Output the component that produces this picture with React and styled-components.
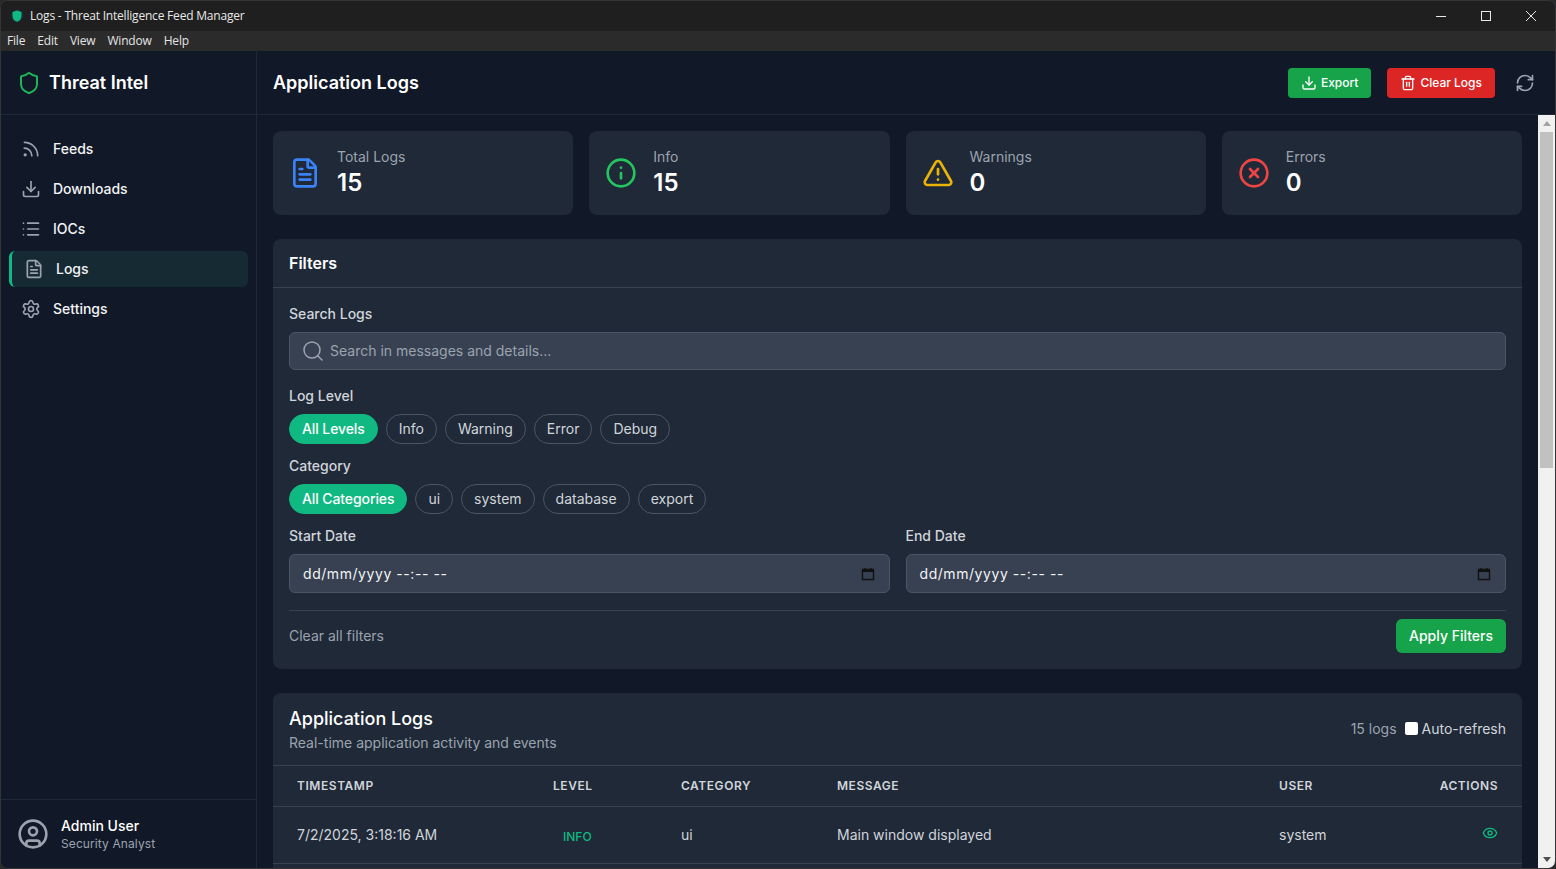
import React from 'react';
import styled, { createGlobalStyle } from 'styled-components';
import {
  Rss, Download, List, FileText, Settings, CircleUser, RefreshCw, Trash2,
  Info, TriangleAlert, CircleX, Search, Eye, Shield,
} from 'lucide-react';

const Global = createGlobalStyle`
  html, body { margin: 0; height: 100%; background: #2a2a2a; overflow: hidden; }
  * { box-sizing: border-box; }
  body { font-family: Inter, "Liberation Sans", sans-serif; color: #fff; }
`;

const Window = styled.div`
  width: 1556px; height: 869px; display: flex; flex-direction: column;
  background: #111827; border-radius: 8px; overflow: hidden; border: 1px solid #353535;
`;
const TitleBar = styled.div`
  height: 30px; flex: none; display: flex; align-items: center; background: #1f1f1f;
  padding: 0 2px 0 9px; font: 12px "Open Sans", sans-serif; color: #e8e8e8;
`;
const AppIcon = styled.svg`width: 14px; height: 14px; margin-right: 6px; flex: none;`;
const TitleText = styled.span`flex: 1; letter-spacing: -0.2px; padding-bottom: 2px;`;
const WinButton = styled.div`
  width: 45px; height: 30px; display: flex; align-items: center; justify-content: center;
  svg { width: 12px; height: 12px; stroke: #e8e8e8; fill: none; stroke-width: 1; }
`;
const MenuBar = styled.div`
  height: 20px; flex: none; display: flex; align-items: center; background: #2b2b2b;
  padding-bottom: 2px;
`;
const MenuItem = styled.span`
  padding: 0 6px; font: 12px "Open Sans", sans-serif; color: #e4e4e4; letter-spacing: -0.18px;
`;
const Body = styled.div`flex: 1; min-height: 0; display: flex;`;
const Sidebar = styled.aside`
  width: 256px; flex: none; display: flex; flex-direction: column;
  background: #111827; border-right: 1px solid #1f2937;
`;
const Brand = styled.div`
  height: 64px; flex: none; display: flex; align-items: center; gap: 8px; padding: 0 16px;
  border-bottom: 1px solid #1f2937; font-size: 18px; font-weight: 600;
  svg { width: 24px; height: 24px; color: #22c55e; flex: none; opacity: .9; }
`;
const Nav = styled.nav`flex: 1; display: flex; flex-direction: column; gap: 4px; padding: 16px 8px 0 8px;`;
const NavItem = styled.div`
  height: 36px; display: flex; align-items: center; gap: 12px; padding-left: 12px;
  font-size: 14px; font-weight: 500; color: #f3f4f6; border-radius: 6px;
  border-left: ${p => (p.$active ? '3px solid #10b981' : 'none')};
  background: ${p => (p.$active ? '#162a33' : 'transparent')};
  svg { width: 20px; height: 20px; color: #9ca3af; flex: none; }
`;
const NavLabel = styled.span`padding-bottom: 1px;`;
const UserBox = styled.div`
  height: 69px; flex: none; display: flex; align-items: center; gap: 12px; padding: 0 16px;
  border-top: 1px solid #1f2937;
  svg { width: 32px; height: 32px; color: #9ca3af; flex: none; }
`;
const UserName = styled.div`font-size: 14px; font-weight: 500; line-height: 18px;`;
const UserRole = styled.div`font-size: 12px; color: #9ca3af; line-height: 17px; letter-spacing: 0.1px;`;

const Main = styled.div`flex: 1; min-width: 0; display: flex; flex-direction: column;`;
const TopBar = styled.header`
  height: 64px; flex: none; display: flex; align-items: center; padding: 0 20px 0 16px;
  border-bottom: 1px solid #1f2937;
`;
const PageTitle = styled.h1`flex: 1; margin: 0; font-size: 18px; font-weight: 600;`;
const ActionButton = styled.div`
  height: 30px; display: flex; align-items: center; gap: 4px; padding: 0 13px; border-radius: 4px;
  margin-right: ${p => p.$mr}px; background: ${p => p.$bg};
  font-size: 12px; font-weight: 500; color: #fff;
  svg { width: 16px; height: 16px; }
`;
const RefreshIcon = styled(RefreshCw)`width: 20px; height: 20px; color: #9ca3af;`;
const ScrollRow = styled.div`flex: 1; min-height: 0; display: flex;`;
const Content = styled.div`
  flex: 1; min-width: 0; overflow: hidden; display: flex; flex-direction: column; gap: 24px;
  padding: 16px 16px 0 16px;
`;
const Scrollbar = styled.div`
  width: 17px; flex: none; background: #f1f1f1; display: flex; flex-direction: column;
  align-items: center;
`;
const ScrollArrow = styled.div`
  height: 17px; flex: none; width: 100%; display: flex; align-items: center; justify-content: center;
  svg { width: 8px; height: 5px; fill: ${p => p.$fill}; }
`;
const ScrollThumb = styled.div`width: 13px; height: 336px; background: #c1c1c1; flex: none;`;
const ScrollSpacer = styled.div`flex: 1;`;

const StatsRow = styled.div`display: grid; grid-template-columns: repeat(4, 1fr); gap: 16px;`;
const StatCard = styled.div`
  height: 84px; background: #1f2937; border-radius: 8px; display: flex; align-items: center;
  gap: 16px; padding: 0 16px;
`;
const StatIcon = styled.div`
  width: 32px; height: 32px; flex: none; color: ${p => p.$color}; margin-top: -1px;
  svg { width: 32px; height: 32px; display: block; }
`;
const StatLabel = styled.div`font-size: 14px; color: #9ca3af; line-height: 18px; margin-bottom: 2px;`;
const StatValue = styled.div`font-size: 24px; font-weight: 600; line-height: 30px;`;

const Card = styled.section`background: #1f2937; border-radius: 8px; flex: none;`;
const CardHeader = styled.div`
  height: 49px; display: flex; align-items: center; padding: 0 16px; border-bottom: 1px solid #374151;
  font-size: 16px; font-weight: 600;
`;
const FilterBody = styled.div`padding: 16px; display: flex; flex-direction: column;`;
const FieldLabel = styled.label`
  display: block; font-size: 14px; font-weight: 500; color: #d1d5db; line-height: 20px;
  margin-bottom: 8px;
`;
const SearchBox = styled.div`
  height: 38px; display: flex; align-items: center; gap: 5px; padding: 0 11px; border-radius: 6px;
  background: #374151; border: 1px solid #4b5563; margin-bottom: 16px;
  svg { width: 24px; height: 24px; color: #9ca3af; flex: none; stroke-width: 1.5; }
`;
const SearchInput = styled.input`
  flex: 1; border: 0; outline: 0; background: transparent; color: #fff; font: 14px Inter, sans-serif;
  padding: 0; margin-bottom: 1px; &::placeholder { color: #9ca3af; opacity: 1; }
`;
const PillRow = styled.div`display: flex; gap: 8px; margin-bottom: 12px;`;
const Pill = styled.div`
  height: 30px; display: flex; align-items: center; padding: 0 12px 1px; border-radius: 15px;
  font-size: 14px; font-weight: ${p => (p.$active ? 500 : 400)};
  letter-spacing: ${p => (p.$active ? '-0.1px' : '0')};
  color: ${p => (p.$active ? '#fff' : '#d1d5db')};
  background: ${p => (p.$active ? '#10b981' : 'transparent')};
  border: 1px solid ${p => (p.$active ? '#10b981' : '#4b5563')};
`;
const DateGrid = styled.div`display: grid; grid-template-columns: 1fr 1fr; gap: 16px;`;
const DateBox = styled.div`
  height: 39px; display: flex; align-items: center; justify-content: space-between;
  padding: 0 14px 0 13px; background: #374151; border: 1px solid #4b5563; border-radius: 6px;
  font-size: 14px; color: #f3f4f6; letter-spacing: 0.56px;
`;
const CalendarIcon = styled.svg`width: 14px; height: 14px; flex: none;`;
const FilterFooter = styled.div`
  margin-top: 17px; padding-top: 8px; border-top: 1px solid #374151;
  display: flex; align-items: center; justify-content: space-between;
`;
const ClearLink = styled.span`font-size: 14px; color: #9ca3af; margin-bottom: 2px;`;
const ApplyButton = styled.div`
  height: 34px; display: flex; align-items: center; padding: 0 13px 2px; border-radius: 6px;
  background: #16a34a; font-size: 14px; font-weight: 500; color: #fff;
`;
const LogsHeader = styled.div`
  height: 73px; display: flex; align-items: center; justify-content: space-between;
  padding: 2px 16px 0; border-bottom: 1px solid #374151;
`;
const LogsTitle = styled.h2`margin: 0; font-size: 18px; font-weight: 500; line-height: 24px;`;
const LogsSub = styled.div`font-size: 14px; color: #9ca3af; line-height: 20px; margin-top: 2px;`;
const LogsMeta = styled.div`display: flex; align-items: center; margin-top: -3px; font-size: 14px;`;
const LogCount = styled.span`color: #9ca3af; margin-right: 8px;`;
const CheckBox = styled.span`
  width: 13px; height: 13px; background: #fff; border-radius: 2px; margin-right: 4px; flex: none;
`;
const CheckLabel = styled.span`color: #d1d5db;`;
const Row = styled.div`
  display: grid; grid-template-columns: 256px 128px 156px 442px 1fr auto; align-items: center;
  padding: 0 24px; border-bottom: 1px solid #374151; height: ${p => p.$h}px;
`;
const HeadCell = styled.div`
  font-size: 12px; font-weight: 600; color: #d1d5db; letter-spacing: 0.55px; margin-bottom: 1px;
`;
const Cell = styled.div`font-size: 14px; color: #d1d5db; margin-bottom: 1px;`;
const LevelBadge = styled.span`
  font-size: 12px; font-weight: 500; color: #10b981; padding-left: 10px; position: relative; top: 1px;
`;
const ActionIcon = styled.div`
  justify-self: end; color: #10b981; height: 16px; margin-top: -4px;
  svg { width: 16px; height: 16px; display: block; }
`;

const levels = ['All Levels', 'Info', 'Warning', 'Error', 'Debug'];
const categories = ['All Categories', 'ui', 'system', 'database', 'export'];
const stats = [
  { label: 'Total Logs', value: 15, color: '#3b82f6', Icon: FileText },
  { label: 'Info', value: 15, color: '#22c55e', Icon: Info },
  { label: 'Warnings', value: 0, color: '#eab308', Icon: TriangleAlert },
  { label: 'Errors', value: 0, color: '#ef4444', Icon: CircleX },
];
const navs = [
  { label: 'Feeds', Icon: Rss },
  { label: 'Downloads', Icon: Download },
  { label: 'IOCs', Icon: List },
  { label: 'Logs', Icon: FileText, active: true },
  { label: 'Settings', Icon: Settings },
];

const Calendar = () => (
  <CalendarIcon viewBox="0 0 14 14">
    <path d="M1.5 2.5h11v10h-11z" fill="none" stroke="#111" strokeWidth="1.4" />
    <path d="M1.5 2.5h11v2.5h-11z" fill="#111" />
    <path d="M4 1v2M10 1v2" stroke="#111" strokeWidth="1.4" />
  </CalendarIcon>
);

export default function App() {
  return (
    <>
      <Global />
      <Window>
        <TitleBar>
          <AppIcon viewBox="0 0 14 14">
            <circle cx="7" cy="7" r="6.5" fill="#1f2937" />
            <path d="M7 1.5 11.5 3v4c0 3-2 5-4.5 5.8C4.500 12 2.500 10 2.500 7V3z" fill="#10b981" />
          </AppIcon>
          <TitleText>Logs - Threat Intelligence Feed Manager</TitleText>
          <WinButton><svg viewBox="0 0 12 12"><path d="M1 6.500h10" /></svg></WinButton>
          <WinButton><svg viewBox="0 0 12 12"><rect x="1.500" y="1.500" width="9" height="9" /></svg></WinButton>
          <WinButton><svg viewBox="0 0 12 12"><path d="M1 1l10 10M11 1 1 11" /></svg></WinButton>
        </TitleBar>
        <MenuBar>
          {['File', 'Edit', 'View', 'Window', 'Help'].map(m => <MenuItem key={m}>{m}</MenuItem>)}
        </MenuBar>
        <Body>
          <Sidebar>
            <Brand>
              <Shield />
              Threat Intel
            </Brand>
            <Nav>
              {navs.map(({ label, Icon, active }) => (
                <NavItem key={label} $active={active}><Icon /><NavLabel>{label}</NavLabel></NavItem>
              ))}
            </Nav>
            <UserBox>
              <CircleUser />
              <div>
                <UserName>Admin User</UserName>
                <UserRole>Security Analyst</UserRole>
              </div>
            </UserBox>
          </Sidebar>
          <Main>
            <TopBar>
              <PageTitle>Application Logs</PageTitle>
              <ActionButton $bg="#16a34a" $mr={16}><Download />Export</ActionButton>
              <ActionButton $bg="#dc2626" $mr={20}><Trash2 />Clear Logs</ActionButton>
              <RefreshIcon />
            </TopBar>
            <ScrollRow>
              <Content>
                <StatsRow>
                  {stats.map(({ label, value, color, Icon }) => (
                    <StatCard key={label}>
                      <StatIcon $color={color}><Icon /></StatIcon>
                      <div>
                        <StatLabel>{label}</StatLabel>
                        <StatValue>{value}</StatValue>
                      </div>
                    </StatCard>
                  ))}
                </StatsRow>
                <Card>
                  <CardHeader>Filters</CardHeader>
                  <FilterBody>
                    <FieldLabel>Search Logs</FieldLabel>
                    <SearchBox>
                      <Search />
                      <SearchInput placeholder="Search in messages and details..." readOnly />
                    </SearchBox>
                    <FieldLabel>Log Level</FieldLabel>
                    <PillRow>
                      {levels.map((l, i) => <Pill key={l} $active={i === 0}>{l}</Pill>)}
                    </PillRow>
                    <FieldLabel>Category</FieldLabel>
                    <PillRow>
                      {categories.map((l, i) => <Pill key={l} $active={i === 0}>{l}</Pill>)}
                    </PillRow>
                    <DateGrid>
                      <div>
                        <FieldLabel>Start Date</FieldLabel>
                        <DateBox>dd/mm/yyyy --:-- --<Calendar /></DateBox>
                      </div>
                      <div>
                        <FieldLabel>End Date</FieldLabel>
                        <DateBox>dd/mm/yyyy --:-- --<Calendar /></DateBox>
                      </div>
                    </DateGrid>
                    <FilterFooter>
                      <ClearLink>Clear all filters</ClearLink>
                      <ApplyButton>Apply Filters</ApplyButton>
                    </FilterFooter>
                  </FilterBody>
                </Card>
                <Card>
                  <LogsHeader>
                    <div>
                      <LogsTitle>Application Logs</LogsTitle>
                      <LogsSub>Real-time application activity and events</LogsSub>
                    </div>
                    <LogsMeta>
                      <LogCount>15 logs</LogCount>
                      <CheckBox />
                      <CheckLabel>Auto-refresh</CheckLabel>
                    </LogsMeta>
                  </LogsHeader>
                  <Row $h={41}>
                    <HeadCell>TIMESTAMP</HeadCell>
                    <HeadCell>LEVEL</HeadCell>
                    <HeadCell>CATEGORY</HeadCell>
                    <HeadCell>MESSAGE</HeadCell>
                    <HeadCell>USER</HeadCell>
                    <HeadCell>ACTIONS</HeadCell>
                  </Row>
                  <Row $h={57}>
                    <Cell>7/2/2025, 3:18:16 AM</Cell>
                    <Cell><LevelBadge>INFO</LevelBadge></Cell>
                    <Cell>ui</Cell>
                    <Cell>Main window displayed</Cell>
                    <Cell>system</Cell>
                    <ActionIcon><Eye /></ActionIcon>
                  </Row>
                  <Row $h={57} />
                </Card>
              </Content>
              <Scrollbar>
                <ScrollArrow $fill="#a3a3a3"><svg viewBox="0 0 8 5"><path d="M4 0 8 5H0z" /></svg></ScrollArrow>
                <ScrollThumb />
                <ScrollSpacer />
                <ScrollArrow $fill="#505050"><svg viewBox="0 0 8 5"><path d="M0 0h8L4 5z" /></svg></ScrollArrow>
              </Scrollbar>
            </ScrollRow>
          </Main>
        </Body>
      </Window>
    </>
  );
}
